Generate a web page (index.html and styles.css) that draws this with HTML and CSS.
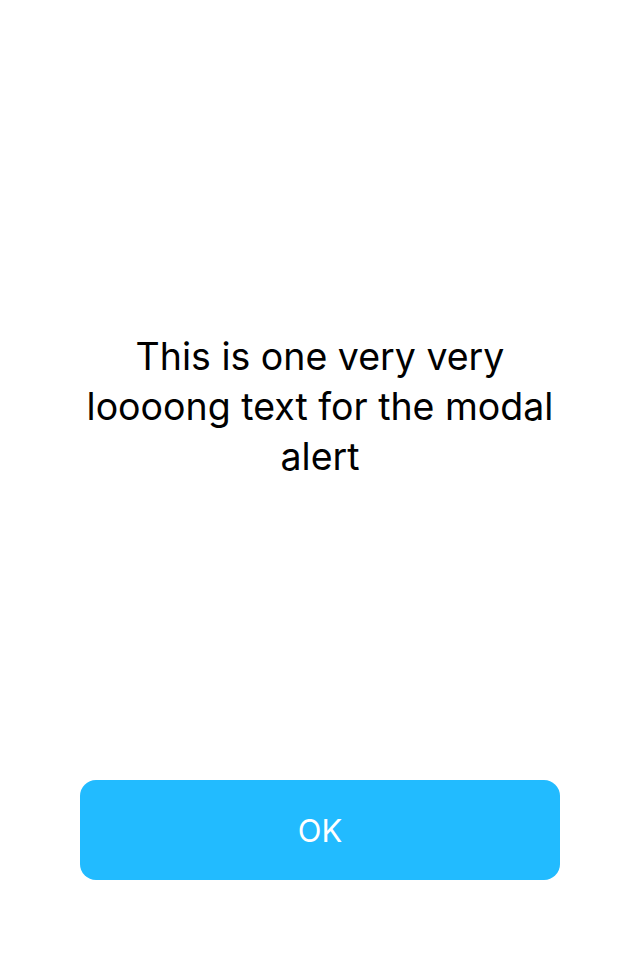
FILE: index.html
```html
<!DOCTYPE html>
<html>
<head>
<meta charset="utf-8">
<link rel="stylesheet" href="styles.css">
</head>
<body>
<div class="screen">
  <div class="message">
    <p class="text">This is one very very loooong text for the modal alert</p>
  </div>
  <div class="actions">
    <button class="ok">OK</button>
  </div>
</div>
</body>
</html>
```
FILE: styles.css
```css
html, body {
  margin: 0;
  padding: 0;
  background: #ffffff;
}
.screen {
  width: 640px;
  height: 960px;
  display: flex;
  flex-direction: column;
  font-family: Inter, "Noto Sans", sans-serif;
}
.message {
  flex: 1;
  display: flex;
  align-items: center;
  justify-content: center;
  padding: 34px 80px 0;
}
.text {
  margin: 0;
  text-align: center;
  font-size: 37.5px;
  line-height: 50px;
  color: #000;
}
.actions {
  padding: 0 80px 80px;
}
.ok {
  display: block;
  width: 100%;
  height: 100px;
  border: none;
  border-radius: 16px;
  background: #22bbff;
  color: #fff;
  font-family: Inter, "Noto Sans", sans-serif;
  font-size: 31px;
}
```
